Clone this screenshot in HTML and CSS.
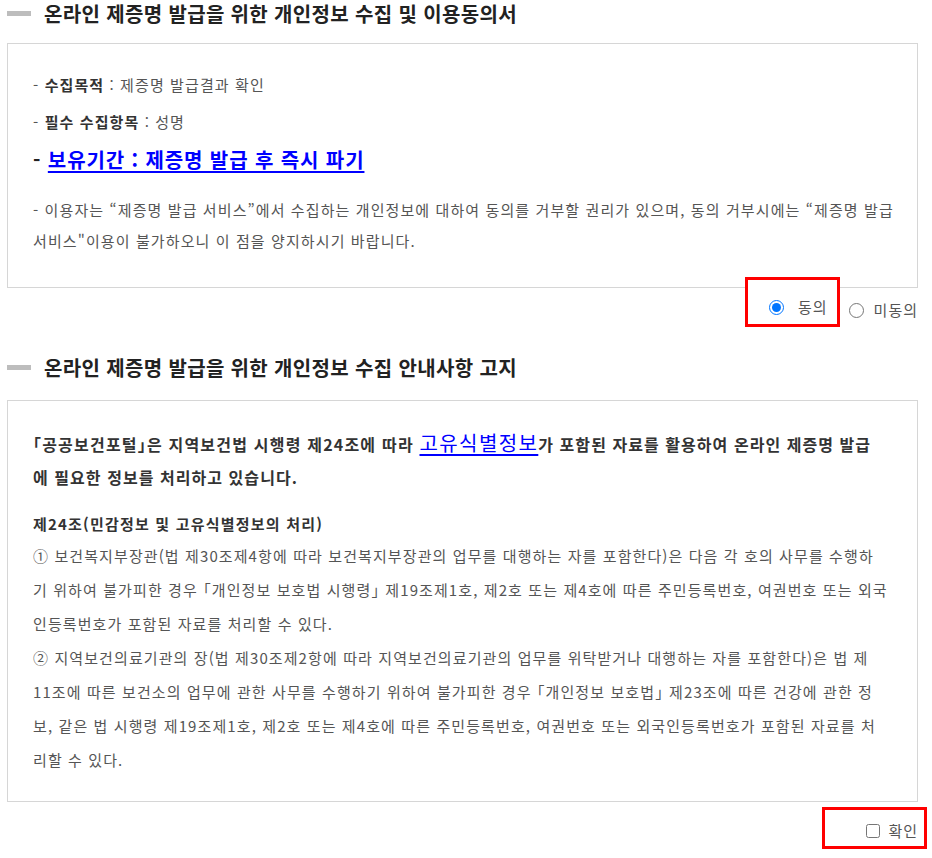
FILE: index.html
```html
<!DOCTYPE html>
<html lang="ko">
<head>
<meta charset="utf-8">
<title>개인정보 수집 및 이용동의</title>
<link rel="stylesheet" href="styles.css">
</head>
<body>
<div class="page">
  <h3 class="sec-title"><span class="bar"></span>온라인 제증명 발급을 위한 개인정보 수집 및 이용동의서</h3>
  <div class="terms-box">
    <p class="item">- <strong>수집목적</strong> : 제증명 발급결과 확인</p>
    <p class="item">- <strong>필수 수집항목</strong> : 성명</p>
    <p class="item-link">- <a href="#">보유기간 : 제증명 발급 후 즉시 파기</a></p>
    <p class="note">- 이용자는 “제증명 발급 서비스”에서 수집하는 개인정보에 대하여 동의를 거부할 권리가 있으며, 동의 거부시에는 “제증명 발급<br>서비스"이용이 불가하오니 이 점을 양지하시기 바랍니다.</p>
  </div>
  <div class="choice-row">
    <label class="choice highlight"><input type="radio" name="agree" checked><span>동의</span></label>
    <label class="choice"><input type="radio" name="agree"><span>미동의</span></label>
  </div>

  <h3 class="sec-title second"><span class="bar"></span>온라인 제증명 발급을 위한 개인정보 수집 안내사항 고지</h3>
  <div class="terms-box notice">
    <p class="lead"><span class="lead-head">「공공보건포털」은 지역보건법 시행령 제24조에 따라 </span><a href="#">고유식별정보</a>가 포함된 자료를 활용하여 온라인 제증명 발급<br>에 필요한 정보를 처리하고 있습니다.</p>
    <p class="law-title">제24조(민감정보 및 고유식별정보의 처리)</p>
    <p class="law">① 보건복지부장관(법 제30조제4항에 따라 보건복지부장관의 업무를 대행하는 자를 포함한다)은 다음 각 호의 사무를 수행하<br>기 위하여 불가피한 경우 「개인정보 보호법 시행령」 제19조제1호, 제2호 또는 제4호에 따른 주민등록번호, 여권번호 또는 외국<br>인등록번호가 포함된 자료를 처리할 수 있다.<br>② 지역보건의료기관의 장(법 제30조제2항에 따라 지역보건의료기관의 업무를 위탁받거나 대행하는 자를 포함한다)은 법 제<br>11조에 따른 보건소의 업무에 관한 사무를 수행하기 위하여 불가피한 경우 「개인정보 보호법」 제23조에 따른 건강에 관한 정<br>보, 같은 법 시행령 제19조제1호, 제2호 또는 제4호에 따른 주민등록번호, 여권번호 또는 외국인등록번호가 포함된 자료를 처<br>리할 수 있다.</p>
  </div>
  <div class="choice-row confirm">
    <label class="choice highlight check"><input type="checkbox"><span>확인</span></label>
  </div>
</div>
</body>
</html>
```

FILE: styles.css
```css
* { box-sizing: border-box; }

html, body {
  margin: 0;
  padding: 0;
  background: #fff;
}

body {
  font-family: "Noto Sans CJK KR", "Noto Sans", sans-serif;
  color: #555;
  font-size: 15px;
  font-feature-settings: "halt";
}

.page {
  margin: 0 14px 0 7px;
  width: 911px;
}

p { margin: 0; white-space: nowrap; }

/* section headings with a short grey bar */
.sec-title {
  display: flex;
  align-items: center;
  margin: 0;
  height: 26px;
  font-size: 20px;
  font-weight: 700;
  color: #222;
  letter-spacing: 0.35px;
}

.sec-title .bar {
  width: 24px;
  height: 5px;
  background: #bdbdbd;
  margin-right: 13px;
  flex: none;
}

.sec-title.second {
  margin-top: 27px;
}

/* bordered boxes */
.terms-box {
  margin-top: 17px;
  border: 1px solid #d6d6d6;
  padding: 22px 25px 31px 25px;
  letter-spacing: 1.1px;
}

.item {
  line-height: 37px;
}

.item strong {
  color: #333;
  font-weight: 700;
}

.item-link {
  line-height: 40px;
  font-size: 20px;
  font-weight: 700;
  color: #222;
  letter-spacing: 0.9px;
}

.item-link a {
  color: #0000ff;
  text-decoration: underline;
  text-underline-offset: 3px;
}

.note {
  margin-top: 14px;
  line-height: 31px;
}

/* agreement radios and confirm checkbox */
.choice-row {
  display: flex;
  justify-content: flex-end;
  align-items: flex-end;
  position: relative;
  margin-top: -11px;
}

.choice {
  display: inline-flex;
  align-items: center;
  line-height: 20px;
  font-size: 15px;
  color: #555;
  letter-spacing: 1px;
}

.choice input {
  margin: 0 14px 0 0;
  width: 15px;
  height: 15px;
}

.choice + .choice {
  margin-left: 9px;
  padding-bottom: 7px;
}

.choice + .choice input {
  margin-right: 10px;
}

.highlight {
  border: 3px solid #ff0000;
  background: #fff;
  padding: 17px 9px 7px 21px;
}

.sec-title.second + .notice {
  margin-top: 20px;
}

.notice {
  padding: 25px 25px 24px 25px;
}

.lead {
  font-size: 16px;
  font-weight: 700;
  color: #333;
  line-height: 33px;
  letter-spacing: 1.05px;
}

.lead .lead-head {
  letter-spacing: 1.2px;
}

.lead a {
  color: #0000ff;
  font-size: 20px;
  font-weight: 400;
  letter-spacing: 1.4px;
  text-decoration: underline;
  text-underline-offset: 3px;
}

.law-title {
  margin-top: 14px;
  font-weight: 700;
  color: #333;
  line-height: 31px;
  letter-spacing: 1.2px;
}

.law {
  line-height: 34px;
}

.confirm {
  margin-top: 5px;
}

.check {
  margin-right: -9px;
  padding: 11px 6px 5px 41px;
}

.check input {
  width: 14px;
  height: 14px;
  margin-right: 8px;
}
```
